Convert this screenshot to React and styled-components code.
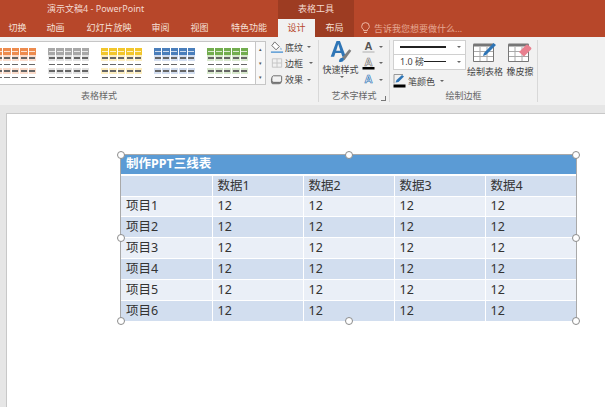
import React from 'react';
import styled, { createGlobalStyle } from 'styled-components';

const FONT = '"Noto Sans", "Noto Sans CJK SC", sans-serif';

const GlobalStyle = createGlobalStyle`
  html, body {
    margin: 0;
    padding: 0;
    background: #e6e6e6;
    font-family: ${FONT};
  }
`;

const Root = styled.div`
  width: 605px;
  height: 407px;
  overflow: hidden;
  display: flex;
  flex-direction: column;
  background: #e6e6e6;
  color: #444;
`;

const TitleBar = styled.div`
  height: 19px;
  background: #b7472a;
  display: flex;
  color: #f3d9d0;
  font-size: 9px;
  line-height: 17px;
`;

const DocTitle = styled.div`
  margin-left: 47px;
  width: 231px;
`;

const ToolTitle = styled.div`
  width: 76px;
  background: #9d3c22;
  text-align: center;
`;

const TabRow = styled.div`
  height: 18px;
  background: #b7472a;
  display: flex;
  font-size: 9px;
  line-height: 17px;
  color: #f5e0d8;
`;

const Tab = styled.div`
  width: ${(props) => props.$width}px;
  text-align: center;
  flex: none;
  background: ${(props) => (props.$dark ? '#9d3c22' : 'transparent')};
`;

const ActiveTab = styled(Tab)`
  background: #f1f1f1;
  color: #b7472a;
`;

const TellMe = styled.div`
  display: flex;
  align-items: center;
  gap: 4px;
  margin-left: 7px;
  color: #e6a893;
`;

const Ribbon = styled.div`
  height: 68px;
  flex: none;
  background: #f1f1f1;
  display: flex;
`;

const Group = styled.div`
  flex: none;
  width: ${(props) => props.$width}px;
  margin-left: ${(props) => props.$left || 0}px;
  display: flex;
  flex-direction: column;
`;

const GroupBody = styled.div`
  flex: 1;
  display: flex;
  min-height: 0;
`;

const GroupLabel = styled.div`
  height: 16px;
  position: relative;
  margin-bottom: 1px;
  text-align: center;
  font-size: 9px;
  line-height: 16px;
  color: #666;
`;

const Separator = styled.div`
  flex: none;
  width: 1px;
  height: 62px;
  margin-top: 3px;
  background: #d8d8d8;
`;

const Gallery = styled.div`
  flex: none;
  width: 376px;
  height: 44px;
  margin-top: 4px;
  box-sizing: border-box;
  background: #fff;
  border: 1px solid #c6c6c6;
  display: flex;
  justify-content: flex-end;
  gap: 12px;
  padding: 6px 7px 0 0;
`;

const Scroller = styled.div`
  flex: none;
  width: 10px;
  height: 44px;
  margin-top: 4px;
  box-sizing: border-box;
  border: 1px solid #c6c6c6;
  border-left: none;
  display: grid;
  grid-template-rows: repeat(3, 1fr);
  color: #555;
  font-size: 5px;
  line-height: 14px;
  text-align: center;
  background: #f8f8f8;
`;

const Thumb = styled.div`
  width: 41px;
  flex: none;
  display: grid;
  grid-template-columns: repeat(5, 1fr);
  grid-auto-rows: 6.6px;
  column-gap: 1px;
`;

const ThumbCell = styled.div`
  display: flex;
  align-items: center;
  justify-content: center;
  background: ${(props) => props.$bg};
`;

const ThumbLine = styled.div`
  width: 6px;
  height: 1.5px;
  background: ${(props) => props.$color};
`;

const EffectColumn = styled.div`
  margin-left: 4px;
  padding-top: 2px;
  display: flex;
  flex-direction: column;
  font-size: 9px;
`;

const EffectRow = styled.div`
  display: flex;
  align-items: center;
  gap: 1px;
  height: 17px;
  white-space: nowrap;
`;

const Caret = styled.span`
  display: inline-block;
  flex: none;
  width: 0;
  height: 0;
  margin-left: ${(props) => props.$gap || 3}px;
  border-left: 2px solid transparent;
  border-right: 2px solid transparent;
  border-top: 2px solid #666;
`;

const QuickStyle = styled.div`
  width: 43px;
  padding-top: 3px;
  display: flex;
  flex-direction: column;
  align-items: center;
  font-size: 9px;
  line-height: 12px;
  white-space: nowrap;
`;

const LetterColumn = styled.div`
  padding-top: 2px;
  display: flex;
  flex-direction: column;
`;

const LetterButton = styled.div`
  display: flex;
  align-items: center;
  height: 17px;
  gap: 3px;
`;

const PenColumn = styled.div`
  width: 73px;
  margin-left: 3px;
  padding-top: 3px;
  display: flex;
  flex-direction: column;
`;

const PenBox = styled.div`
  box-sizing: border-box;
  background: #fff;
  border: 1px solid #d0d0d0;
  border-top: ${(props) => (props.$joined ? 'none' : '1px solid #d0d0d0')};
  height: ${(props) => (props.$joined ? 17 : 16)}px;
  display: flex;
  align-items: center;
  padding: 0 4px 0 6px;
  font-size: 9px;
  color: #444;
  white-space: nowrap;
`;

const PenStroke = styled.div`
  flex: 1;
  height: ${(props) => props.$weight}px;
  margin-right: 8px;
  background: #222;
`;

const PenColor = styled.div`
  margin-top: 4px;
  display: flex;
  align-items: center;
  gap: 2px;
  font-size: 9px;
`;

const BigTool = styled.div`
  width: ${(props) => props.$width}px;
  flex: none;
  padding-top: 5px;
  display: flex;
  flex-direction: column;
  align-items: center;
  gap: 2px;
  font-size: 9px;
  line-height: 13px;
  white-space: nowrap;
`;

const Slide = styled.div`
  flex: 1;
  margin: 8px 0 0 6px;
  padding: 41px 0 0 115px;
  background: #fff;
  border-top: 1px solid #c8c8c8;
  border-left: 1px solid #c8c8c8;
  box-sizing: border-box;
`;

const Selection = styled.div`
  position: relative;
  width: 455px;
  height: 166px;
  margin-left: -1px;
  box-shadow: 0 0 0 1px #a9a9a9;
`;

const Table = styled.table`
  width: 100%;
  height: 100%;
  table-layout: fixed;
  border-collapse: collapse;
  font-size: 12.5px;
  color: #333;
`;

const TitleCell = styled.td`
  height: 20px;
  box-sizing: border-box;
  padding: 0 0 1px 5px;
  background: #5b9bd5;
  color: #fff;
  font-weight: 700;
  font-size: 12.5px;
  line-height: 18px;
`;

const Cell = styled.td`
  height: ${(props) => props.$height || 21}px;
  box-sizing: border-box;
  padding: 0 0 0 5px;
  line-height: 18px;
  background: ${(props) => (props.$shade ? '#d2deef' : '#eaeff7')};
  border: 1px solid #fff;
  border-top-width: ${(props) => (props.$first ? 2 : 1)}px;

  &:first-child {
    border-left: none;
  }

  &:last-child {
    border-right: none;
  }
`;

const Handle = styled.div`
  position: absolute;
  left: ${(props) => props.$x}%;
  top: ${(props) => props.$y}%;
  width: 8px;
  height: 8px;
  box-sizing: border-box;
  margin: -4px 0 0 -4px;
  border: 1.5px solid #8c8c8c;
  border-radius: 50%;
  background: #fff;
`;

const DialogIcon = styled.span`
  position: absolute;
  right: 3px;
  top: 8px;
  width: 4px;
  height: 4px;
  border-right: 1px solid #777;
  border-bottom: 1px solid #777;
`;

const thumbs = [
  { head: '#ed8b4e', tint: '#fbdccb' },
  { head: '#a8a8a8', tint: '#e2e2e2' },
  { head: '#f2c62c', tint: '#fdeec0' },
  { head: '#4a7ebb', tint: '#d3def0' },
  { head: '#72ad4e', tint: '#d8e9cd' },
];

const handles = [
  [0, 0],
  [50, 0],
  [100, 0],
  [0, 50],
  [100, 50],
  [0, 100],
  [50, 100],
  [100, 100],
];

const rows = ['项目1', '项目2', '项目3', '项目4', '项目5', '项目6'];
const headers = ['数据1', '数据2', '数据3', '数据4'];

const StyleThumb = ({ head, tint }) => (
  <Thumb>
    {[0, 1, 2, 3, 4].flatMap((row) =>
      [0, 1, 2, 3, 4].map((col) => {
        const bg = row === 0 ? head : row % 2 === 1 ? tint : '#fff';
        const line = row === 0 ? 'rgba(255,255,255,0.75)' : '#666';
        return (
          <ThumbCell key={`${row}-${col}`} $bg={bg}>
            <ThumbLine $color={line} />
          </ThumbCell>
        );
      })
    )}
  </Thumb>
);

const BulbIcon = () => (
  <svg width="9" height="12" viewBox="0 0 9 12" fill="none" stroke="#eeb9a6">
    <path d="M2.6 7.6C1.4 6.8.7 5.7.7 4.4a3.8 3.8 0 0 1 7.6 0c0 1.3-.7 2.4-1.900 3.200v1H2.600z" />
    <path d="M3 10.500h3" />
  </svg>
);

const ShadingIcon = () => (
  <svg width="14" height="14" viewBox="0 0 15 14" fill="none">
    <path d="M5 1.500l5 5-3.500 3.500-4.500-4.500z" stroke="#666" fill="#fff" />
    <path d="M11.500 7.500c1 1.400 1.200 2 .6 2.400-.6.3-1.200-.5-.6-2.400z" fill="#5b9bd5" />
    <path d="M1 12.500h13" stroke="#5b9bd5" strokeWidth="1.600" />
  </svg>
);

const BorderIcon = () => (
  <svg width="14" height="14" viewBox="0 0 15 14" fill="none" stroke="#c4c4c4">
    <path d="M2.500 2.500h10v9h-10zM7.500 2.500v9M2.500 7h10" />
  </svg>
);

const EffectIcon = () => (
  <svg width="14" height="14" viewBox="0 0 15 14">
    <path d="M3 3.500h9.500v6a3 3 0 0 1-3 2H4a3 3 0 0 1-3-3 5 5 0 0 1 2-5z" fill="#7f7f7f" />
    <path d="M3.500 2.500h8a1 1 0 0 1 1 1v4a2 2 0 0 1-2 2H4a2 2 0 0 1-2-2V5a2.500 2.500 0 0 1 1.500-2.500z" fill="#f2f2f2" stroke="#666" />
  </svg>
);

const QuickStyleIcon = () => (
  <svg width="22" height="24" viewBox="0 0 32 34">
    <path d="M1 24L9.500 1h5L23 24h-5l-1.800-5.500H7.800L6 24zM9 15h6L12 5.500z" fill="#2e75b6" />
    <path d="M17 26l11-13 3 2-10 14z" fill="#7f7f7f" />
    <path d="M13 31c0-4 3-6 5.500-5.500 1.500.5 2 2 1.500 3.500-1 2.500-4 3-7 2z" fill="#2e75b6" />
  </svg>
);

const LetterIcon = ({ bar, color, stroke }) => (
  <svg width="13" height="16" viewBox="0 0 13 16">
    <text
      x="6.500"
      y="10.500"
      textAnchor="middle"
      fontFamily='"Liberation Sans", sans-serif'
      fontSize="11"
      fontWeight="700"
      fill={stroke ? '#fff' : color}
      stroke={stroke ? color : 'none'}
      strokeWidth="0.7"
    >
      A
    </text>
    {bar && <rect x="0.500" y="12" width="12" height={bar === '#000' ? 2.500 : 2} fill={bar} />}
  </svg>
);

const PenColorIcon = () => (
  <svg width="13" height="14" viewBox="0 0 13 14">
    <path d="M1 .5h9M1 .5v9" stroke="#999" fill="none" />
    <path d="M2.500 8.500l1-2.500L9 1l2 1.500-5.500 5.500z" fill="#2e75b6" />
    <rect x="0.500" y="10.500" width="12" height="3" fill="#000" />
  </svg>
);

const DrawTableIcon = () => (
  <svg width="24" height="21" viewBox="0 0 24 21" fill="none">
    <path d="M.5 2.500h20v17H.5z" fill="#fff" stroke="#777" />
    <path d="M.5 1.500h20v3H.5z" fill="#777" />
    <path d="M7 5v14M14 5v14M1 9.500h19M1 14.500h19" stroke="#aaa" />
    <path d="M10 14l1-3 9.500-10 2.500 2-10 10z" fill="#2e75b6" />
  </svg>
);

const EraserIcon = () => (
  <svg width="24" height="21" viewBox="0 0 24 21" fill="none">
    <path d="M.5 2.500h20v17H.5z" fill="#fff" stroke="#777" />
    <path d="M.5 1.500h20v3H.5z" fill="#777" />
    <path d="M7 5v14M14 5v14M1 9.500h19M1 14.500h19" stroke="#aaa" />
    <path d="M11 10l7-7a1.500 1.500 0 0 1 2 0l3 2.500a1.500 1.500 0 0 1 0 2l-7 7z" fill="#e8808f" />
  </svg>
);

const App = () => {
  return (
    <Root>
      <GlobalStyle />
      <TitleBar>
        <DocTitle>演示文稿4 - PowerPoint</DocTitle>
        <ToolTitle>表格工具</ToolTitle>
      </TitleBar>
      <TabRow>
        <Tab $width={35}>切换</Tab>
        <Tab $width={41}>动画</Tab>
        <Tab $width={66}>幻灯片放映</Tab>
        <Tab $width={37}>审阅</Tab>
        <Tab $width={41}>视图</Tab>
        <Tab $width={58}>特色功能</Tab>
        <ActiveTab $width={37}>设计</ActiveTab>
        <Tab $width={39} $dark>布局</Tab>
        <TellMe>
          <BulbIcon />
          告诉我您想要做什么...
        </TellMe>
      </TabRow>
      <Ribbon>
        <Group $width={438} $left={-120}>
          <GroupBody>
            <Gallery>
              {thumbs.map((thumb) => (
                <StyleThumb key={thumb.head} head={thumb.head} tint={thumb.tint} />
              ))}
            </Gallery>
            <Scroller>
              <span>▴</span>
              <span>▾</span>
              <span>▾</span>
            </Scroller>
            <EffectColumn>
              <EffectRow>
                <ShadingIcon />
                底纹
                <Caret />
              </EffectRow>
              <EffectRow>
                <BorderIcon />
                边框
                <Caret $gap={5} />
              </EffectRow>
              <EffectRow>
                <EffectIcon />
                效果
                <Caret />
              </EffectRow>
            </EffectColumn>
          </GroupBody>
          <GroupLabel>表格样式</GroupLabel>
        </Group>
        <Separator />
        <Group $width={70}>
          <GroupBody>
            <QuickStyle>
              <QuickStyleIcon />
              快速样式
              <Caret $gap={0} />
            </QuickStyle>
            <LetterColumn>
              <LetterButton>
                <LetterIcon color="#555" bar="#d0d0d0" />
                <Caret $gap={1} />
              </LetterButton>
              <LetterButton>
                <LetterIcon color="#777" bar="#000" stroke />
                <Caret $gap={1} />
              </LetterButton>
              <LetterButton>
                <LetterIcon color="#2e75b6" stroke />
                <Caret $gap={1} />
              </LetterButton>
            </LetterColumn>
          </GroupBody>
          <GroupLabel>
            艺术字样式
            <DialogIcon />
          </GroupLabel>
        </Group>
        <Separator />
        <Group $width={147}>
          <GroupBody>
            <PenColumn>
              <PenBox>
                <PenStroke $weight={2} />
                <Caret $gap={0} />
              </PenBox>
              <PenBox $joined>
                1.0 磅
                <PenStroke $weight={1} />
                <Caret $gap={0} />
              </PenBox>
              <PenColor>
                <PenColorIcon />
                笔颜色
                <Caret />
              </PenColor>
            </PenColumn>
            <BigTool $width={38}>
              <DrawTableIcon />
              绘制表格
            </BigTool>
            <BigTool $width={32}>
              <EraserIcon />
              橡皮擦
            </BigTool>
          </GroupBody>
          <GroupLabel>绘制边框</GroupLabel>
        </Group>
        <Separator />
      </Ribbon>
      <Slide>
        <Selection>
          <Table>
            <tbody>
              <tr>
                <TitleCell colSpan={5}>制作PPT三线表</TitleCell>
              </tr>
              <tr>
                <Cell $shade $first />
                {headers.map((header) => (
                  <Cell key={header} $shade $first>
                    {header}
                  </Cell>
                ))}
              </tr>
              {rows.map((row, index) => (
                <tr key={row}>
                  <Cell $shade={index % 2 === 1} $height={index === 0 ? 20 : 21}>
                    {row}
                  </Cell>
                  {headers.map((header) => (
                    <Cell
                      key={header}
                      $shade={index % 2 === 1}
                      $height={index === 0 ? 20 : 21}
                    >
                      12
                    </Cell>
                  ))}
                </tr>
              ))}
            </tbody>
          </Table>
          {handles.map(([x, y]) => (
            <Handle key={`${x}-${y}`} $x={x} $y={y} />
          ))}
        </Selection>
      </Slide>
    </Root>
  );
};

export default App;
